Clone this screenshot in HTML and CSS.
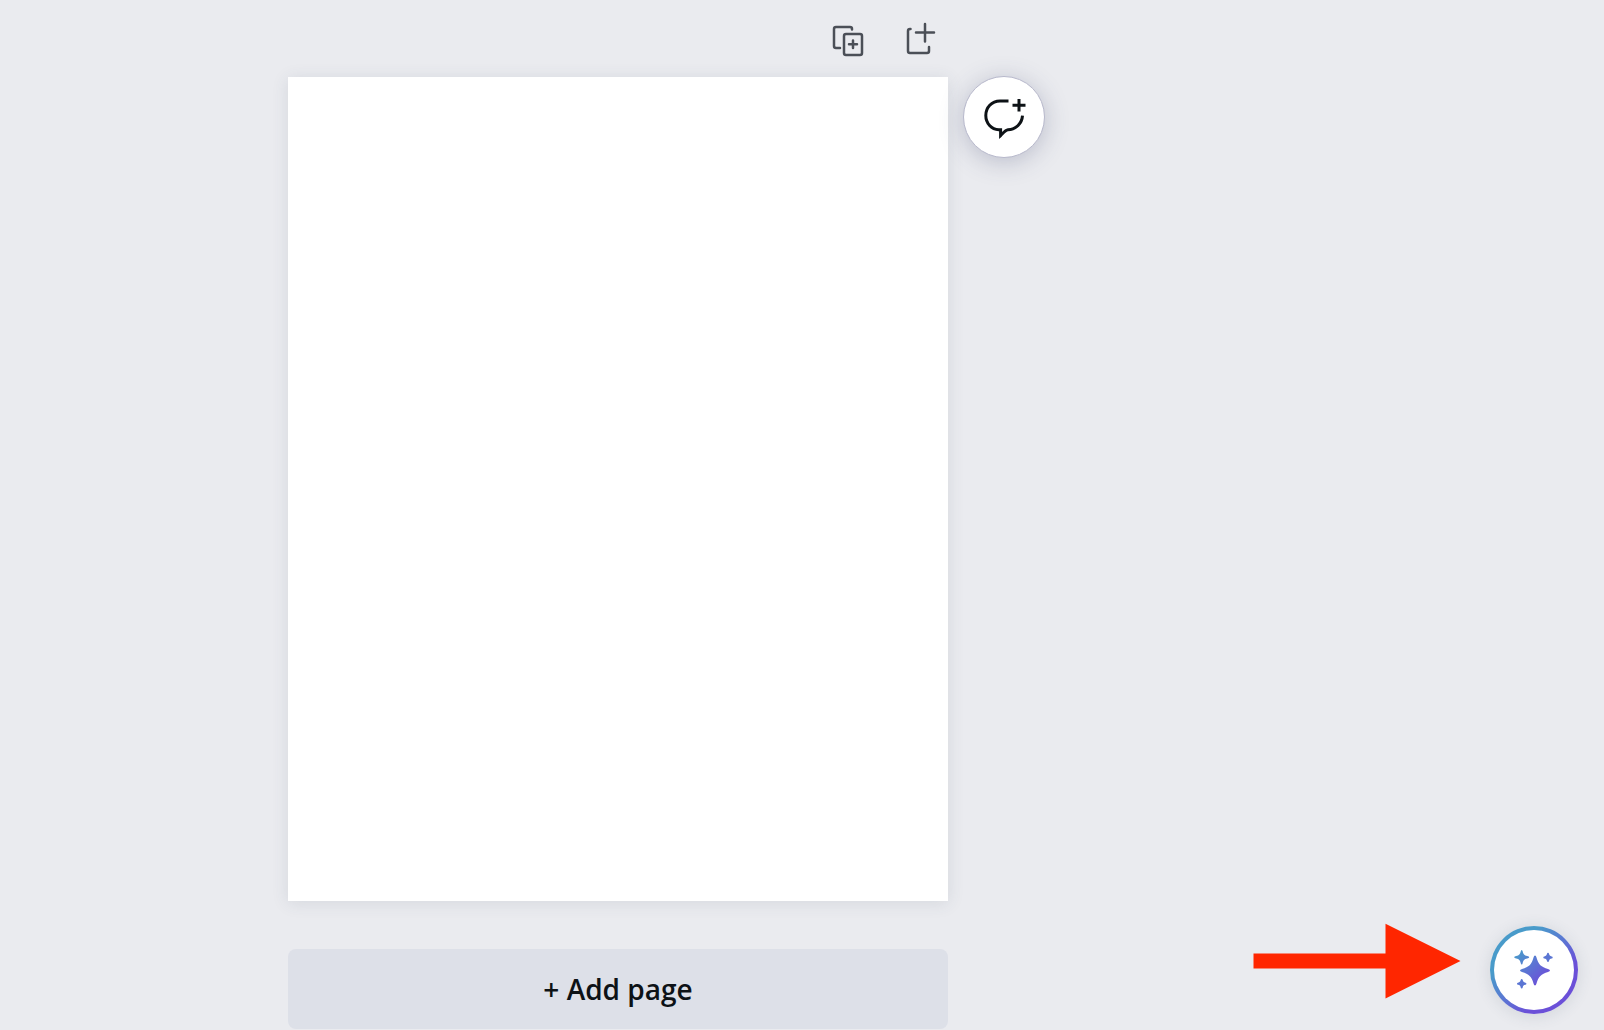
FILE: index.html
```html
<!DOCTYPE html>
<html lang="en">
<head>
  <meta charset="utf-8">
  <meta name="viewport" content="width=device-width, initial-scale=1">
  <title>Design editor</title>
  <link rel="stylesheet" href="styles.css">
</head>
<body>
  <main class="workspace">
    <section class="document">
      <div class="toolbar">
        <button class="tool" type="button" aria-label="Duplicate page">
          <svg class="tool-icon" viewBox="0 0 40 40">
            <path d="M24 9.500V9a2 2 0 0 0-2-2H8a2 2 0 0 0-2 2v17a2 2 0 0 0 2 2h4"/>
            <rect x="16" y="14" width="18" height="21" rx="2"/>
            <path d="M25 20.500v7.500M21 24.200h8"/>
          </svg>
        </button>
        <button class="tool" type="button" aria-label="Add page above">
          <svg class="tool-icon" viewBox="0 0 40 40">
            <path d="M10.500 9H10a2 2 0 0 0-2 2v20a2 2 0 0 0 2 2h17a2 2 0 0 0 2-2v-4"/>
            <path d="M25 4v17.500M16 12.500h18"/>
          </svg>
        </button>
      </div>
      <div class="canvas"></div>
      <button class="add-page" type="button">+ Add page</button>
    </section>
    <aside class="side">
      <button class="comment" type="button" aria-label="Add comment">
        <svg class="comment-icon" viewBox="0 0 48 48">
          <path d="M28.500 8H20C11.500 8 5.800 14.500 5.800 22.500c0 8 5.800 13.800 13 14.300h1.800v5.800c2.600-2.500 4.600-5.400 7.400-5.800 8-.4 14-6.400 14.500-14.200" stroke-linejoin="miter"/>
          <path d="M39 6v12.500M32.500 12.200h13"/>
        </svg>
      </button>
    </aside>
  </main>

  <div class="assist">
    <svg class="arrow" viewBox="0 0 208 76" aria-hidden="true">
      <path d="M.5 30.500h132V.8L207.500 38l-75 37.500V45.500H.5z"/>
    </svg>
    <button class="magic" type="button" aria-label="Open assistant">
      <svg class="magic-icon" viewBox="0 0 80 80">
        <defs>
          <linearGradient id="spark" gradientUnits="userSpaceOnUse" x1="22" y1="22" x2="50" y2="50">
            <stop offset="0" stop-color="#499bca"/>
            <stop offset=".5" stop-color="#5b76d3"/>
            <stop offset="1" stop-color="#6b50d8"/>
          </linearGradient>
        </defs>
        <g fill="url(#spark)">
          <path d="M41 25.500q1 0 1.500 2c2 7 4.500 9.500 11.500 11.500q2 .6 2 1.500t-2 1.500c-7 2-9.500 4.500-11.500 11.500q-.5 2-1.500 2t-1.500-2c-2-7-4.500-9.500-11.500-11.500q-2-.6-2-1.500t2-1.500c7-2 9.500-4.500 11.500-11.500q.5-2 1.500-2z"/>
          <path d="M27.700 20q.7 0 1 1.500c.7 3 1.500 3.800 4.500 4.500q2 .5 2 1.300t-2 1.300c-3 .7-3.800 1.500-4.500 4.500q-.3 1.500-1 1.500t-1-1.500c-.7-3-1.500-3.800-4.500-4.500q-2-.5-2-1.300t2-1.300c3-.7 3.800-1.500 4.500-4.500q.3-1.500 1-1.500z"/>
          <path d="M54 22.700q.8 0 1 1c.4 1.700 1 2.300 2.700 2.700q1 .2 1 1t-1 1c-1.700.4-2.300 1-2.700 2.700q-.2 1-1 1t-1-1c-.4-1.700-1-2.300-2.700-2.700q-1-.2-1-1t1-1c1.700-.4 2.300-1 2.700-2.700q.2-1 1-1z" fill="#5b76d3"/>
          <path d="M27.700 49q.8 0 1 1c.4 1.700 1 2.300 2.700 2.700q1 .2 1 1t-1 1c-1.700.4-2.300 1-2.700 2.700q-.2 1-1 1t-1-1c-.4-1.700-1-2.300-2.700-2.700q-1-.2-1-1t1-1c1.700-.4 2.300-1 2.700-2.700q.2-1 1-1z" fill="#5b76d3"/>
        </g>
      </svg>
    </button>
  </div>
</body>
</html>
```

FILE: styles.css
```css
* {
  box-sizing: border-box;
}

body {
  margin: 0;
  background: #eaebef;
  color: #0d1216;
  font-family: "Open Sans", "Noto Sans", sans-serif;
}

button {
  margin: 0;
  padding: 0;
  border: 0;
  background: none;
  color: inherit;
  font: inherit;
  cursor: pointer;
}

svg {
  display: block;
}

.workspace {
  display: grid;
  grid-template-columns: 18fr minmax(auto, 660px) 41fr;
}

.document {
  grid-column: 2;
  display: flex;
  flex-direction: column;
}

.toolbar {
  display: flex;
  justify-content: flex-end;
  gap: 24px;
  padding: 16px 4px 13px 0;
}

.tool {
  display: grid;
  place-items: center;
  width: 48px;
  height: 48px;
}

.tool-icon {
  width: 40px;
  height: 40px;
  fill: none;
  stroke: #4b4f57;
  stroke-width: 2.5;
  stroke-linecap: round;
}

.canvas {
  aspect-ratio: 660 / 824;
  background: #fff;
  box-shadow: 0 2px 16px rgba(57, 76, 96, 0.12);
}

.add-page {
  height: 80px;
  margin-top: 48px;
  border-radius: 8px;
  background: #dde0e8;
  font-size: 28px;
  font-weight: 600;
  line-height: 36px;
}

.side {
  padding: 76px 0 0 15px;
}

.comment {
  display: grid;
  place-items: center;
  width: 82px;
  height: 82px;
  border: 1px solid #b7b8cb;
  border-radius: 50%;
  background: #fff;
  box-shadow: 0 4px 24px rgba(64, 72, 110, 0.28);
}

.comment-icon {
  width: 48px;
  height: 48px;
  fill: none;
  stroke: #0d1216;
  stroke-width: 3;
}

.assist {
  position: fixed;
  right: 26px;
  bottom: 16px;
  display: flex;
  align-items: flex-end;
  gap: 29px;
}

.arrow {
  width: 208px;
  height: 76px;
  margin-bottom: 15px;
  fill: #ff2600;
}

.magic {
  width: 88px;
  height: 88px;
  padding: 4px;
  border-radius: 50%;
  background: linear-gradient(135deg, #499bca 28%, #5b76d3 50%, #6b50d8 70%);
  box-shadow: 0 2px 16px rgba(57, 76, 96, 0.14);
}

.magic-icon {
  width: 80px;
  height: 80px;
  border-radius: 50%;
  background: #fff;
}
```
